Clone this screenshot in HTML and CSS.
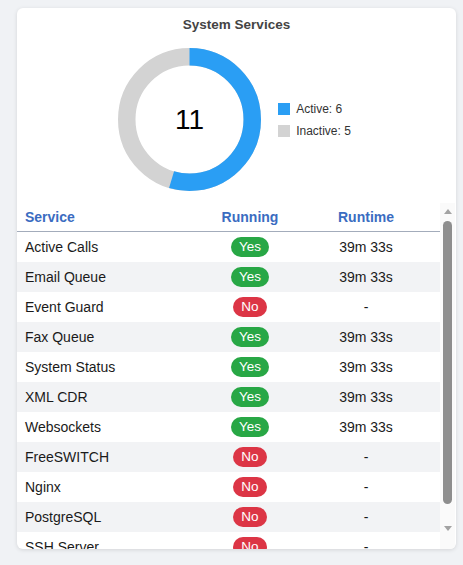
FILE: index.html
```html
<!DOCTYPE html>
<html>
<head>
<meta charset="utf-8">
<link rel="stylesheet" href="styles.css">
</head>
<body>
<div class="card">
  <div class="title">System Services</div>
  <div class="chart">
    <div class="donut">
      <svg width="143" height="143" viewBox="0 0 143 143">
        <circle cx="71.5" cy="71.5" r="62.75" fill="none" stroke="#d3d3d3" stroke-width="17.5"/>
        <circle cx="71.5" cy="71.5" r="62.75" fill="none" stroke="#2a9ef4" stroke-width="17.5" stroke-dasharray="215.06 394.27" transform="rotate(-90 71.5 71.5)"/>
      </svg>
      <div class="total">11</div>
    </div>
    <div class="legend">
      <div class="legend-item"><span class="swatch swatch-active"></span>Active: 6</div>
      <div class="legend-item"><span class="swatch swatch-inactive"></span>Inactive: 5</div>
    </div>
  </div>
  <div class="table-area">
    <div class="viewport">
      <table class="services">
        <colgroup><col class="c1"><col class="c2"><col class="c3"></colgroup>
        <thead>
          <tr><th class="left">Service</th><th>Running</th><th>Runtime</th></tr>
        </thead>
        <tbody>
          <tr><td class="left">Active Calls</td><td><span class="badge yes">Yes</span></td><td>39m 33s</td></tr>
          <tr><td class="left">Email Queue</td><td><span class="badge yes">Yes</span></td><td>39m 33s</td></tr>
          <tr><td class="left">Event Guard</td><td><span class="badge no">No</span></td><td>-</td></tr>
          <tr><td class="left">Fax Queue</td><td><span class="badge yes">Yes</span></td><td>39m 33s</td></tr>
          <tr><td class="left">System Status</td><td><span class="badge yes">Yes</span></td><td>39m 33s</td></tr>
          <tr><td class="left">XML CDR</td><td><span class="badge yes">Yes</span></td><td>39m 33s</td></tr>
          <tr><td class="left">Websockets</td><td><span class="badge yes">Yes</span></td><td>39m 33s</td></tr>
          <tr><td class="left">FreeSWITCH</td><td><span class="badge no">No</span></td><td>-</td></tr>
          <tr><td class="left">Nginx</td><td><span class="badge no">No</span></td><td>-</td></tr>
          <tr><td class="left">PostgreSQL</td><td><span class="badge no">No</span></td><td>-</td></tr>
          <tr><td class="left">SSH Server</td><td><span class="badge no">No</span></td><td>-</td></tr>
        </tbody>
      </table>
    </div>
    <div class="scrollbar" aria-hidden="true">
      <span class="arrow arrow-up"></span>
      <span class="thumb"></span>
      <span class="arrow arrow-down"></span>
    </div>
  </div>
</div>
</body>
</html>
```
FILE: styles.css
```css
html, body {
  margin: 0;
  padding: 0;
}
body {
  background: #f0f2f5;
  font-family: "Liberation Sans", Arial, sans-serif;
  padding: 8px 7px 0 17px;
  height: 565px;
  box-sizing: border-box;
}
.card {
  width: 439px;
  height: 541px;
  background: #fff;
  border-radius: 6px;
  box-shadow: 0 1px 4px rgba(0, 0, 0, 0.12);
  overflow: hidden;
  display: flex;
  flex-direction: column;
}
.title {
  padding-top: 8px;
  font-size: 13.5px;
  line-height: 17px;
  font-weight: bold;
  color: #444;
  text-align: center;
}
.chart {
  margin-top: 15px;
  display: flex;
  justify-content: center;
  align-items: center;
  gap: 17px;
  padding-right: 4px;
}
.donut {
  position: relative;
  width: 143px;
  height: 143px;
}
.donut svg {
  display: block;
}
.total {
  position: absolute;
  inset: 0;
  display: flex;
  align-items: center;
  justify-content: center;
  font-size: 28px;
  color: #000;
}
.legend {
  display: flex;
  flex-direction: column;
  gap: 10px;
}
.legend-item {
  display: flex;
  align-items: center;
  gap: 6px;
  font-size: 12px;
  line-height: 12px;
  color: #333;
}
.swatch {
  width: 12px;
  height: 12px;
  display: inline-block;
}
.swatch-active { background: #2a9ef4; }
.swatch-inactive { background: #d3d3d3; }
.table-area {
  margin-top: 12px;
  flex: 1;
  min-height: 0;
  display: flex;
}
.viewport {
  width: 423px;
  overflow: hidden;
}
.scrollbar {
  width: 15px;
  background: #fafafa;
  display: flex;
  flex-direction: column;
  align-items: center;
  padding-top: 6px;
  box-sizing: border-box;
}
.arrow {
  width: 0;
  height: 0;
  border-left: 4.5px solid transparent;
  border-right: 4.5px solid transparent;
}
.arrow-up {
  border-bottom: 5px solid #a3a3a3;
}
.arrow-down {
  margin-top: 22px;
  border-top: 5px solid #a3a3a3;
}
.thumb {
  margin-top: 7px;
  width: 9px;
  height: 283px;
  border-radius: 4.5px;
  background: #8e8e8e;
}
.services {
  width: 423px;
  border-collapse: collapse;
  table-layout: fixed;
  font-size: 14px;
  color: #1a1a1a;
}
.c1 { width: 191px; }
.c2 { width: 84px; }
.c3 { width: 148px; }
.services th {
  height: 28px;
  padding: 0;
  font-weight: bold;
  color: #3a6cc1;
  text-align: center;
  vertical-align: middle;
  border-bottom: 1px solid #a3acbb;
}
.services td {
  height: 30px;
  padding: 0;
  text-align: center;
  vertical-align: middle;
}
.services .left {
  text-align: left;
  padding-left: 8px;
}
.services tbody tr:nth-child(even) td {
  background: #f2f3f5;
}
.badge {
  display: inline-block;
  padding: 0 8px;
  height: 20px;
  line-height: 20px;
  border-radius: 10px;
  font-size: 13.5px;
  color: #fff;
}
.yes { background: #28a745; }
.no { background: #dc3545; }
```
